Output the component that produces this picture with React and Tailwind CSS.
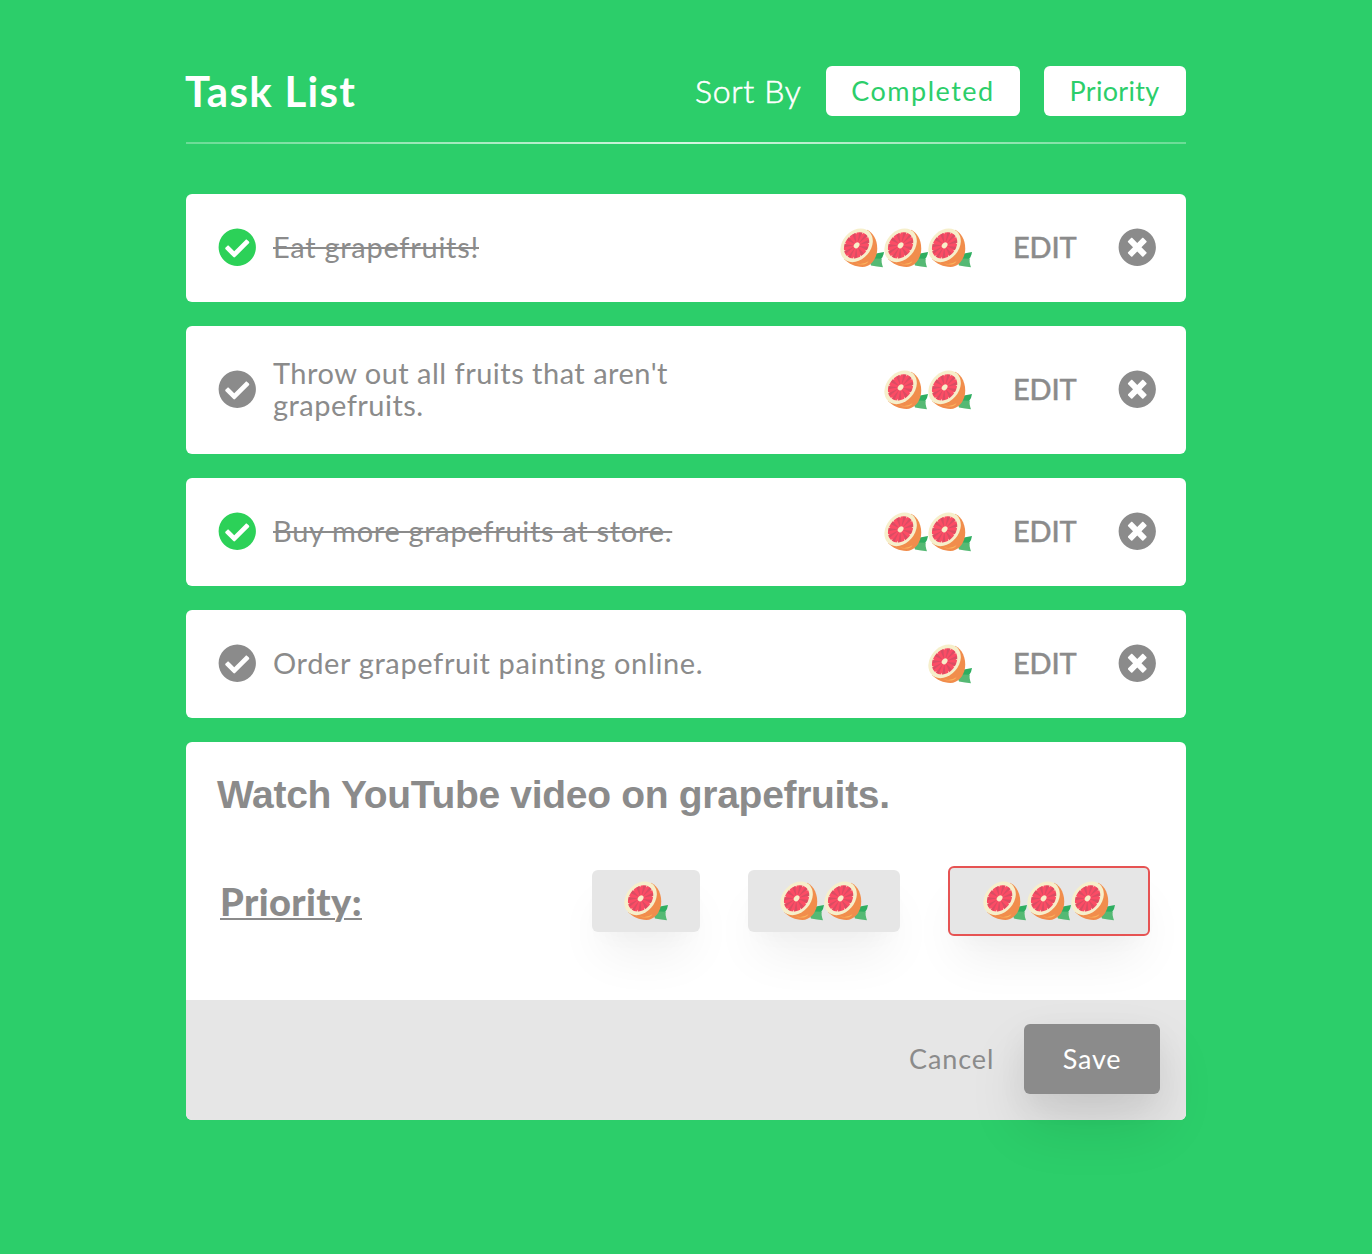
import { FaCheckCircle, FaTimesCircle } from "react-icons/fa";

const segments = Array.from({ length: 11 }, (_, i) => (i * 360) / 11);

function Grapefruit() {
  return (
    <svg viewBox="0 0 44 40" className="h-10 w-11 shrink-0" aria-hidden="true">
      <path d="M31 30 L36 25.4 L44 24 Q43.5 28 41.3 30.8 L34 34Z" fill="#2eae60" />
      <path d="M29 32 L35 30.4 L41.8 30.8 Q41 34 43 39.2 Q37 38.8 31 37.5Z" fill="#55b974" />
      <path d="M27 1.8 C34 5 38.3 14 37 24 C35.5 33 29.5 38.9 22.5 38.9 C15 38.9 9 36 4 31Z" fill="#f18d4c" />
      <g transform="translate(16.6 17.3) rotate(-49)">
        <ellipse rx="18.6" ry="14.2" fill="#f6efcb" />
        <ellipse rx="14.4" ry="11.2" fill="#fb4c65" />
        {segments.map((angle) => (
          <path key={angle} d="M0 -2 L-2 -10.6 L.6 -11Z" fill="#d94d63" transform={`scale(1.28 1) rotate(${angle})`} />
        ))}
        {segments.map((angle) => (
          <path key={angle} d="M-.6 -11.5 L.6 -11.5 L0 -9.8Z" fill="#f6efcb" transform={`scale(1.28 1) rotate(${angle + 7})`} />
        ))}
        <ellipse rx="3.3" ry="2.5" fill="#f8efc9" />
      </g>
      <path d="M15.5 35 Q22 37.5 28.5 33.2 Q26.8 36.6 21.5 36.6 Q17.8 36.5 15.5 35Z" fill="#fbb45e" />
    </svg>
  );
}

function Priority({ level }) {
  return (
    <div className="flex">
      {Array.from({ length: level }, (_, i) => (
        <Grapefruit key={i} />
      ))}
    </div>
  );
}

const tasks = [
  { text: "Eat grapefruits!", done: true, level: 3, tracking: "tracking-[0.72px]" },
  { text: "Throw out all fruits that aren't grapefruits.", done: false, level: 2, tracking: "tracking-[0.48px]" },
  { text: "Buy more grapefruits at store.", done: true, level: 2, tracking: "tracking-[0.7px]" },
  { text: "Order grapefruit painting online.", done: false, level: 1, tracking: "tracking-[0.64px]" },
];

function Task({ task }) {
  return (
    <li className="flex items-center rounded-md bg-white py-8 pr-[30px] pl-8 text-[#8b8b8b]">
      <FaCheckCircle
        className={`mb-px size-[38.5px] shrink-0 ${task.done ? "text-[#2cd158]" : "text-[#8b8b8b]"}`}
      />
      <div className="ml-[16.5px] flex min-h-11 w-[450px] items-center">
        <span
          className={`-mt-px mb-px text-[29px] leading-8 ${task.tracking} ${task.done ? "line-through decoration-2" : ""}`}
        >
          {task.text}
        </span>
      </div>
      <div className="ml-auto">
        <Priority level={task.level} />
      </div>
      <button className="mb-0.5 ml-[41px] w-[63px] text-left text-[29px] leading-8 font-medium tracking-[-0.2px] whitespace-nowrap [-webkit-text-stroke:0.4px]">
        EDIT
      </button>
      <FaTimesCircle className="mb-px ml-[41.5px] size-[38.5px] shrink-0" />
    </li>
  );
}

function PriorityOption({ level, selected }) {
  return (
    <button
      className={`flex items-center justify-center rounded-md bg-[#e6e6e6] shadow-[0_30px_50px_-10px_rgba(0,0,0,0.07),0_12px_24px_-10px_rgba(0,0,0,0.03)] ${
        selected ? "h-[70px] border-2 border-[#e65353] px-[33px]" : "h-[62px] px-8"
      }`}
    >
      <Priority level={level} />
    </button>
  );
}

export default function App() {
  return (
    <div className="min-h-screen bg-[#2cce6a] font-['Lato','Liberation_Sans',sans-serif]">
      <main className="mx-auto w-[1000px] pt-[66px]">
        <header className="flex h-[50px] items-center whitespace-nowrap text-white">
          <h1 className="-ml-px text-[42px] leading-[50px] font-bold tracking-[1.3px]">Task List</h1>
          <span className="ml-auto w-[107px] text-[32px] leading-[50px] font-light tracking-[0.7px] [-webkit-text-stroke:0.6px]">
            Sort By
          </span>
          <button className="ml-6 h-[50px] w-[194px] rounded-md bg-white text-[27px] tracking-[1.5px] text-[#2cce6a]">
            Completed
          </button>
          <button className="ml-6 h-[50px] w-[142px] rounded-md bg-white pr-px text-[27px] tracking-[0.3px] text-[#2cce6a]">
            Priority
          </button>
        </header>
        <div className="mt-[26px] h-0.5 bg-linear-to-r from-white/30 via-white/80 to-white/30" />
        <ul className="mt-[50px] flex flex-col gap-6">
          {tasks.map((task) => (
            <Task key={task.text} task={task} />
          ))}
        </ul>
        <section className="mt-6 rounded-md bg-white whitespace-nowrap text-[#8b8b8b]">
          <div className="flex h-[258px] flex-col pt-[30px] pr-9 pl-8">
            <h2 className="-ml-px font-['Liberation_Sans',sans-serif] text-[39px] leading-[46px] font-bold tracking-[-0.3px]">
              Watch YouTube video on grapefruits.
            </h2>
            <div className="mt-12 flex items-center gap-12">
              <h3 className="mr-auto mb-px ml-0.5 text-[38px] leading-[46px] font-black tracking-[0.4px] underline decoration-2 underline-offset-[2px]">
                Priority:
              </h3>
              <PriorityOption level={1} />
              <PriorityOption level={2} />
              <PriorityOption level={3} selected />
            </div>
          </div>
          <footer className="flex h-[120px] items-start justify-end rounded-b-md bg-[#e6e6e6] pt-6 pr-[26px]">
            <button className="mr-[31px] h-[70px] w-[84px] text-left text-[27px] tracking-[0.9px]">Cancel</button>
            <button className="h-[70px] w-[136px] rounded-md bg-[#8b8b8b] text-[27px] tracking-[0.8px] text-white shadow-[0_30px_60px_rgba(0,0,0,0.11),0_10px_30px_rgba(0,0,0,0.05)]">
              Save
            </button>
          </footer>
        </section>
      </main>
    </div>
  );
}
